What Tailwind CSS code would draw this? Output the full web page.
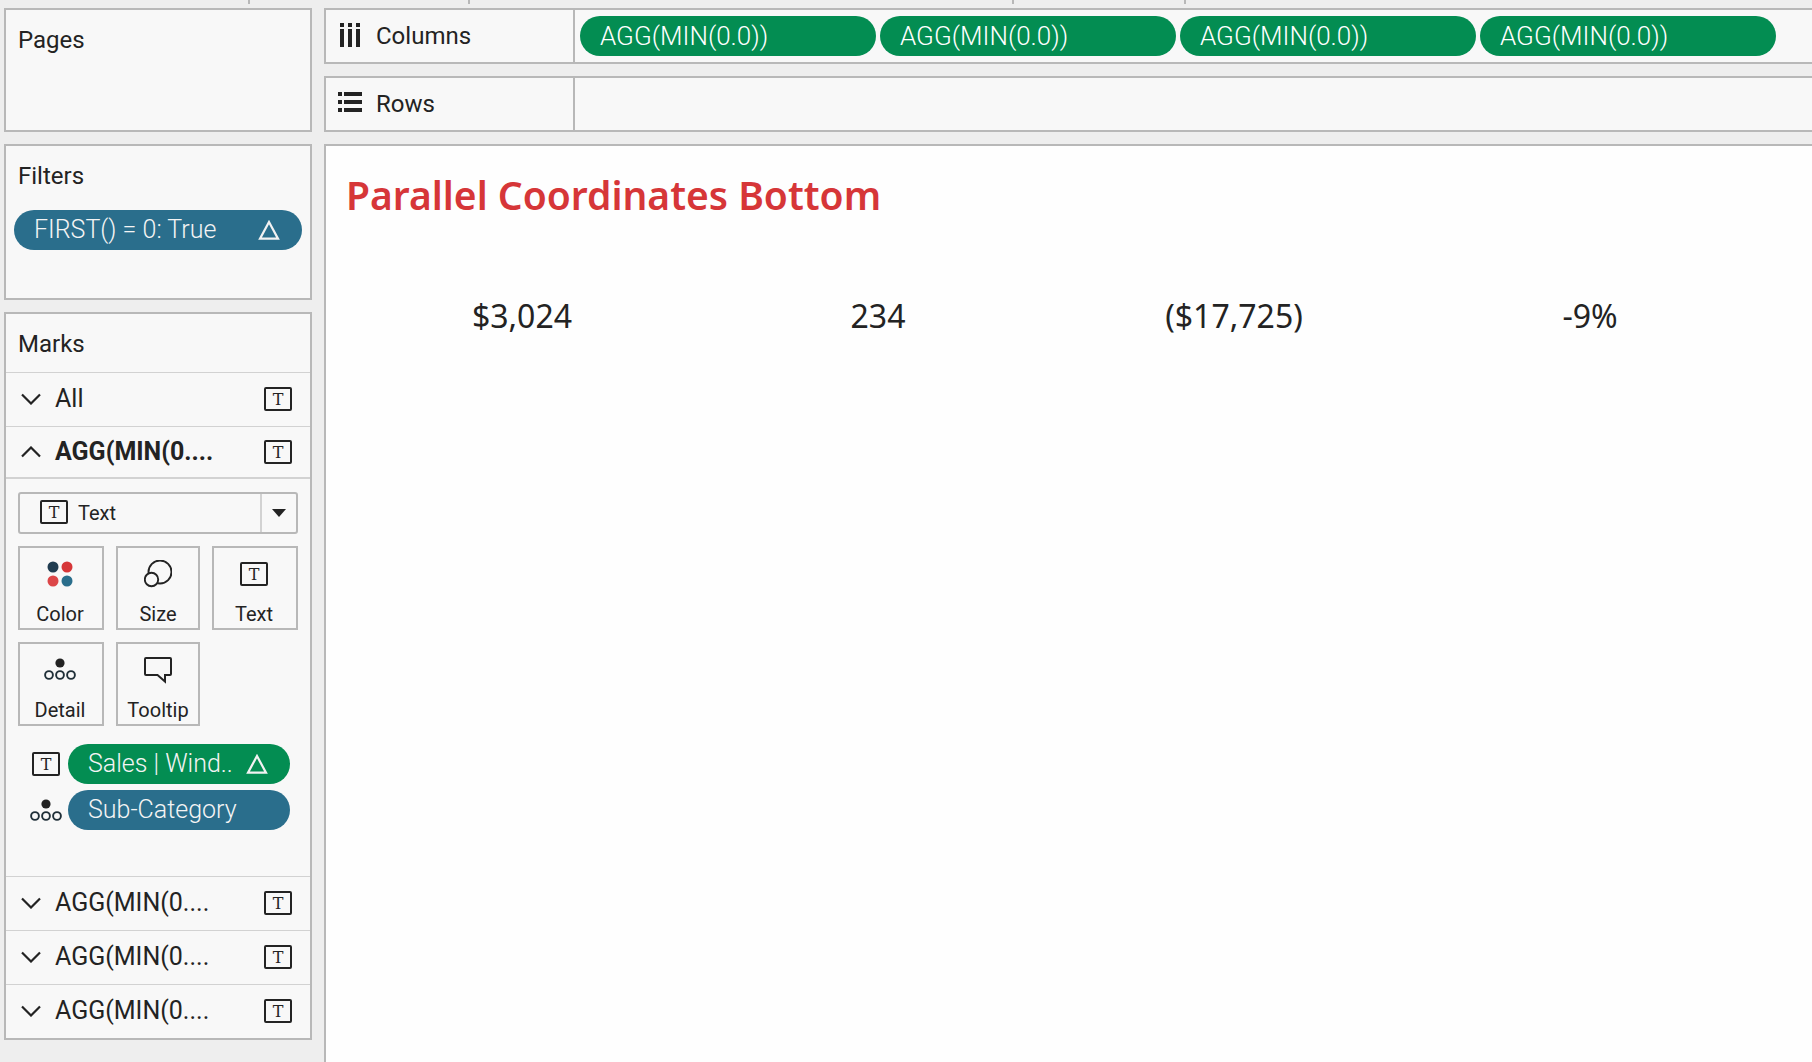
<!DOCTYPE html>
<html lang="en">
<head>
<meta charset="utf-8">
<title>Parallel Coordinates Bottom</title>
<script src="https://cdn.jsdelivr.net/npm/@tailwindcss/browser@4"></script>
</head>
<body class="flex min-h-screen flex-col overflow-x-hidden bg-[#eeeeee] font-[Roboto,sans-serif] text-[24px] leading-8 text-[#232323]">
<svg class="hidden" aria-hidden="true">
  <symbol id="mark" viewBox="0 0 28 24"><rect x="1" y="1" width="26" height="22" rx="1" fill="none" stroke="#232323" stroke-width="2"/><text x="14" y="18" text-anchor="middle" font-family="DejaVu Serif, serif" font-size="16" font-weight="400" fill="#232323">T</text></symbol>
  <symbol id="down" viewBox="0 0 20 12"><path d="M1 1.5 10 10.500 19 1.5" fill="none" stroke="#232323" stroke-width="2.2"/></symbol>
  <symbol id="up" viewBox="0 0 20 12"><path d="M1 10.500 10 1.500 19 10.500" fill="none" stroke="#232323" stroke-width="2.2"/></symbol>
  <symbol id="delta" viewBox="0 0 22 20"><path d="M11 2 20 18.700H2Z" fill="none" stroke="#f2f2f2" stroke-width="2.200"/></symbol>
  <symbol id="detail" viewBox="0 0 32 22"><circle cx="16" cy="5" r="4.600" fill="#232323"/><g fill="none" stroke="#1f2f38" stroke-width="1.900"><circle cx="5" cy="17" r="3.900"/><circle cx="16" cy="17" r="3.900"/><circle cx="27" cy="17" r="3.900"/></g></symbol>
</svg>

<div class="flex h-2 shrink-0 items-start" aria-hidden="true">
  <span class="ml-[248px] h-1 w-0.5 bg-[#b8b8b8]"></span>
  <span class="ml-[218px] h-1 w-0.5 bg-[#b8b8b8]"></span>
  <span class="ml-[542px] h-1 w-0.5 bg-[#b8b8b8]"></span>
  <span class="ml-[170px] h-1 w-0.5 bg-[#b8b8b8]"></span>
</div>

<div class="flex grow gap-3 pl-1">
  <aside class="flex w-[308px] shrink-0 flex-col gap-3">
    <section class="h-[124px] border-2 border-[#b8b8b8] bg-[#f8f8f8] px-3 py-3">
      <h2 class="leading-9">Pages</h2>
    </section>

    <section class="h-[156px] border-2 border-[#b8b8b8] bg-[#f8f8f8] px-2 py-3">
      <h2 class="px-1 leading-9">Filters</h2>
      <button class="mt-4 flex h-10 w-full items-center justify-between rounded-full bg-[#2a6e8c] pr-[22px] pl-5 text-[25px] font-light text-[#f4f4f4]">FIRST() = 0: True<svg class="h-5 w-[22px]"><use href="#delta"/></svg></button>
    </section>

    <section class="border-2 border-[#b8b8b8] bg-[#f8f8f8]">
      <h2 class="h-[58px] px-3 py-3 leading-9">Marks</h2>
      <button class="flex h-[54px] w-full items-center border-t border-[#d2d2d2] pr-[18px] pb-0.5 pl-[15px] text-[25px]"><svg class="mr-3.5 h-3 w-5"><use href="#down"/></svg>All<svg class="ml-auto h-6 w-7"><use href="#mark"/></svg></button>
      <button class="flex h-[53px] w-full items-center border-t border-b-2 border-t-[#d2d2d2] border-b-[#d2d2d2] pr-[18px] pl-[15px] text-[25px] font-bold"><svg class="mr-3.5 h-3 w-5"><use href="#up"/></svg>AGG(MIN(0....<svg class="ml-auto h-6 w-7"><use href="#mark"/></svg></button>

      <div class="h-[397px] pt-[13px] pr-3 pl-3 text-[20px]">
        <div class="relative">
          <select aria-label="Mark type" class="h-[42px] w-full appearance-none rounded-[3px] border-2 border-[#b8b8b8] pl-[58px] leading-8"><option>Text</option></select>
          <svg class="pointer-events-none absolute top-2 left-[22px] h-6 w-7"><use href="#mark"/></svg>
          <span class="pointer-events-none absolute top-0.5 right-0 flex h-[38px] w-[38px] items-center justify-center border-l-2 border-[#d2d2d2] pr-0.5"><svg class="h-2 w-3.5" viewBox="0 0 14 8"><path d="M0 0h14L7 8Z" fill="#232323"/></svg></span>
        </div>
        <div class="mt-3 grid grid-cols-[86px_84px_86px] gap-3 leading-6">
          <button class="flex h-[84px] flex-col items-center justify-between border-2 border-[#b8b8b8] pt-3 pr-0.5 pb-0.5"><svg class="h-7 w-8" viewBox="0 0 32 28"><circle cx="9" cy="7" r="5.500" fill="#203c50"/><circle cx="23" cy="7" r="5.500" fill="#d63638"/><circle cx="9" cy="21" r="5.500" fill="#dc4648"/><circle cx="23" cy="21" r="5.500" fill="#2a6e8c"/></svg>Color</button>
          <button class="flex h-[84px] flex-col items-center justify-between border-2 border-[#b8b8b8] pt-3 pb-0.5"><svg class="h-7 w-7" viewBox="0 0 28 28"><circle cx="16" cy="12" r="11.500" fill="none" stroke="#232323" stroke-width="1.900"/><circle cx="7.500" cy="19.500" r="6.700" fill="#f8f8f8" stroke="#232323" stroke-width="1.900"/></svg>Size</button>
          <button class="flex h-[84px] flex-col items-center justify-between border-2 border-[#b8b8b8] pt-3.5 pr-0.5 pb-0.5"><svg class="h-6 w-7"><use href="#mark"/></svg>Text</button>
          <button class="flex h-[84px] flex-col items-center justify-between border-2 border-[#b8b8b8] pt-3.5 pr-0.5 pb-0.5"><svg class="h-[22px] w-8"><use href="#detail"/></svg>Detail</button>
          <button class="flex h-[84px] flex-col items-center justify-between border-2 border-[#b8b8b8] pt-3 pb-0.5"><svg class="h-7 w-7" viewBox="0 0 28 28"><path d="M2 2H26Q27 2 27 3V18Q27 19 26 19H21V25.500L13.500 19H2Q1 19 1 18V3Q1 2 2 2Z" fill="none" stroke="#232323" stroke-width="2"/></svg>Tooltip</button>
        </div>
        <div class="mt-[18px] grid grid-cols-[32px_222px] items-center gap-x-1.5 gap-y-1.5 pl-3 text-[25px] font-light text-[#f4f4f4]">
          <svg class="h-6 w-7 justify-self-center"><use href="#mark"/></svg>
          <button class="flex h-10 items-center justify-between rounded-full bg-[#038d52] pr-[22px] pl-5">Sales | Wind..<svg class="h-5 w-[22px]"><use href="#delta"/></svg></button>
          <svg class="h-[22px] w-8"><use href="#detail"/></svg>
          <button class="flex h-10 items-center rounded-full bg-[#2a6e8c] pr-[22px] pl-5">Sub-Category</button>
        </div>
      </div>

      <button class="flex h-[54px] w-full items-center border-t border-[#d2d2d2] pr-[18px] pb-0.5 pl-[15px] text-[25px]"><svg class="mr-3.5 h-3 w-5"><use href="#down"/></svg>AGG(MIN(0....<svg class="ml-auto h-6 w-7"><use href="#mark"/></svg></button>
      <button class="flex h-[54px] w-full items-center border-t border-[#d2d2d2] pr-[18px] pb-0.5 pl-[15px] text-[25px]"><svg class="mr-3.5 h-3 w-5"><use href="#down"/></svg>AGG(MIN(0....<svg class="ml-auto h-6 w-7"><use href="#mark"/></svg></button>
      <button class="flex h-[54px] w-full items-center border-t border-[#d2d2d2] pr-[18px] pb-0.5 pl-[15px] text-[25px]"><svg class="mr-3.5 h-3 w-5"><use href="#down"/></svg>AGG(MIN(0....<svg class="ml-auto h-6 w-7"><use href="#mark"/></svg></button>
    </section>
  </aside>

  <main class="flex min-w-0 grow flex-col gap-3">
    <section class="flex h-14 border-2 border-r-0 border-[#b8b8b8] bg-[#f8f8f8]">
      <h2 class="flex w-[249px] shrink-0 items-center gap-3.5 border-r-2 border-[#b8b8b8] pl-3"><svg class="mb-0.5 h-6 w-6" viewBox="0 0 24 24" fill="#232323"><path d="M2 0h4v4H2ZM10 0h4v4h-4ZM18 0h4v4h-4ZM2 6h4v18H2ZM10 6h4v18h-4ZM18 6h4v18h-4Z"/></svg>Columns</h2>
      <div class="flex min-w-0 grow items-center gap-1 pr-9 pl-[5px] text-[26px] font-light text-white">
        <button class="h-10 flex-1 rounded-full bg-[#038d52] px-5 text-left">AGG(MIN(0.0))</button>
        <button class="h-10 flex-1 rounded-full bg-[#038d52] px-5 text-left">AGG(MIN(0.0))</button>
        <button class="h-10 flex-1 rounded-full bg-[#038d52] px-5 text-left">AGG(MIN(0.0))</button>
        <button class="h-10 flex-1 rounded-full bg-[#038d52] px-5 text-left">AGG(MIN(0.0))</button>
      </div>
    </section>

    <section class="flex h-14 border-2 border-r-0 border-[#b8b8b8] bg-[#f8f8f8]">
      <h2 class="flex w-[249px] shrink-0 items-center gap-3.5 border-r-2 border-[#b8b8b8] pl-3"><svg class="h-6 w-6" viewBox="0 0 24 24" fill="#232323"><path d="M0 2h4v4H0ZM6 2h18v4H6ZM0 10h4v4H0ZM6 10h18v4H6ZM0 18h4v4H0ZM6 18h18v4H6Z" transform="translate(0 -2)"/></svg>Rows</h2>
    </section>

    <section class="grow border-t-2 border-l-2 border-[#b8b8b8] bg-[#fefefe] pt-[23px] pr-11 pl-[18px] font-['Noto_Sans',sans-serif]">
      <h1 class="pl-0.5 text-[39px] leading-[52px] font-semibold text-[#d63638]">Parallel Coordinates Bottom</h1>
      <div class="mt-[71px] grid grid-cols-4 text-center text-[32px] leading-[48px]">
        <span>$3,024</span><span>234</span><span>($17,725)</span><span>-9%</span>
      </div>
    </section>
  </main>
</div>
</body>
</html>
